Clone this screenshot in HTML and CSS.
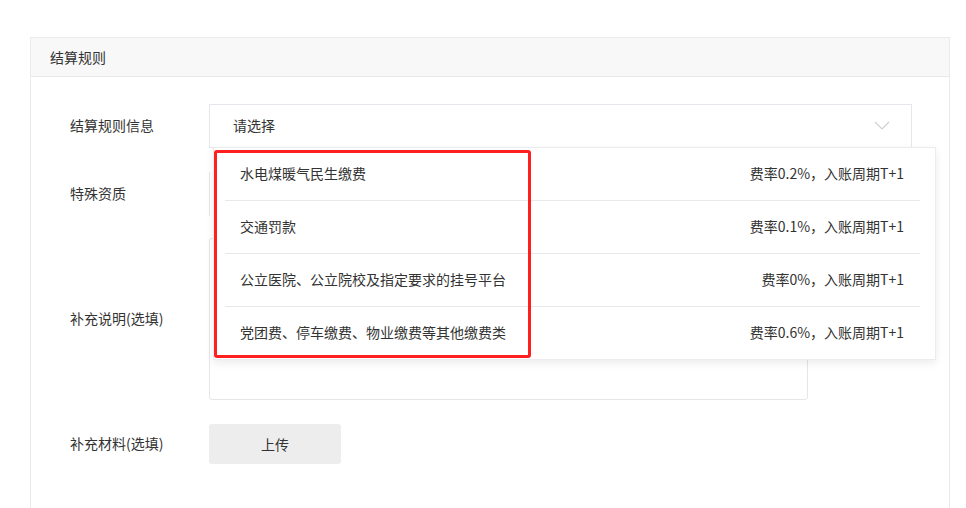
FILE: index.html
```html
<!DOCTYPE html>
<html lang="zh-CN">
<head>
    <meta charset="UTF-8">
    <meta name="viewport" content="width=device-width, initial-scale=1.0">
    <title>结算规则</title>
    <link rel="stylesheet" href="styles.css">
</head>
<body>
    <div class="panel">
        <div class="panel-header">结算规则</div>
        <div class="panel-body">
            <div class="form-row">
                <div class="form-label">结算规则信息</div>
                <div class="select-wrap">
                    <div class="select">
                        <span class="placeholder">请选择</span>
                        <svg class="arrow" width="16" height="9" viewBox="0 0 16 9">
                            <polyline points="1,1 8,8 15,1" fill="none" stroke="#cfcfd4" stroke-width="1.2"/>
                        </svg>
                    </div>
                    <div class="dropdown">
                        <ul class="options">
                            <li class="option"><span>水电煤暖气民生缴费</span><span>费率0.2%，入账周期T+1</span></li>
                            <li class="option"><span>交通罚款</span><span>费率0.1%，入账周期T+1</span></li>
                            <li class="option"><span>公立医院、公立院校及指定要求的挂号平台</span><span>费率0%，入账周期T+1</span></li>
                            <li class="option"><span>党团费、停车缴费、物业缴费等其他缴费类</span><span>费率0.6%，入账周期T+1</span></li>
                        </ul>
                        <div class="mark"></div>
                    </div>
                </div>
            </div>

            <div class="form-row row-special">
                <div class="form-label">特殊资质</div>
                <div class="field-box"></div>
            </div>

            <div class="form-row row-note">
                <div class="form-label">补充说明(选填)</div>
                <textarea class="note"></textarea>
            </div>

            <div class="form-row">
                <div class="form-label">补充材料(选填)</div>
                <button class="upload">上传</button>
            </div>
        </div>
    </div>
</body>
</html>
```

FILE: styles.css
```css
body {
    margin: 0;
    padding: 37px 16px 0 30px;
    font-family: "Noto Sans CJK SC", "Liberation Sans", sans-serif;
    font-size: 14px;
    color: #333;
    background-color: #fff;
}
.panel {
    border: 1px solid #ebebee;
    border-bottom: none;
    height: 470px;
}
.panel-header {
    height: 38px;
    line-height: 38px;
    padding-left: 19px;
    background-color: #f8f8f9;
    border-bottom: 1px solid #e8e8ec;
}
.panel-body {
    padding: 27px 0 0 39px;
}
.form-row {
    display: flex;
    align-items: center;
    margin-bottom: 24px;
}
.form-label {
    width: 139px;
    flex-shrink: 0;
    line-height: 20px;
    margin-top: -2px;
}
.select-wrap {
    position: relative;
    z-index: 2;
}
.select {
    box-sizing: border-box;
    width: 703px;
    height: 44px;
    border: 1px solid #e6e6ec;
    display: flex;
    align-items: center;
    justify-content: space-between;
    padding: 0 21px 2px 23px;
}
.arrow {
    display: block;
}
.dropdown {
    position: absolute;
    top: 43px;
    left: 4px;
    width: 723px;
    box-sizing: border-box;
    background-color: #fff;
    border: 1px solid #ececf0;
    box-shadow: 0 3px 8px rgba(0, 0, 0, 0.08);
}
.options {
    list-style: none;
    margin: 0;
    padding: 0 15px 0 11px;
}
.option {
    display: flex;
    justify-content: space-between;
    align-items: center;
    height: 52px;
    padding: 0 16px 2px 15px;
    box-sizing: border-box;
    line-height: 20px;
}
.option + .option {
    height: 53px;
    border-top: 1px solid #e8e8ec;
}
.mark {
    position: absolute;
    top: 2px;
    left: 0;
    width: 317px;
    height: 208px;
    box-sizing: border-box;
    border: 3px solid #ff1f1f;
    border-radius: 3px;
}
.row-special {
    margin-bottom: 22px;
}
.field-box {
    box-sizing: border-box;
    width: 703px;
    height: 44px;
    border-left: 1px solid #e6e6ec;
}
.note {
    box-sizing: border-box;
    width: 599px;
    height: 162px;
    border: 1px solid #e6e6ea;
    border-radius: 3px;
    resize: none;
    margin: 0;
}
.upload {
    width: 132px;
    height: 40px;
    border: none;
    border-radius: 3px;
    background-color: #ededed;
    color: #333;
    font-family: inherit;
    font-size: 14px;
    cursor: pointer;
}
```
